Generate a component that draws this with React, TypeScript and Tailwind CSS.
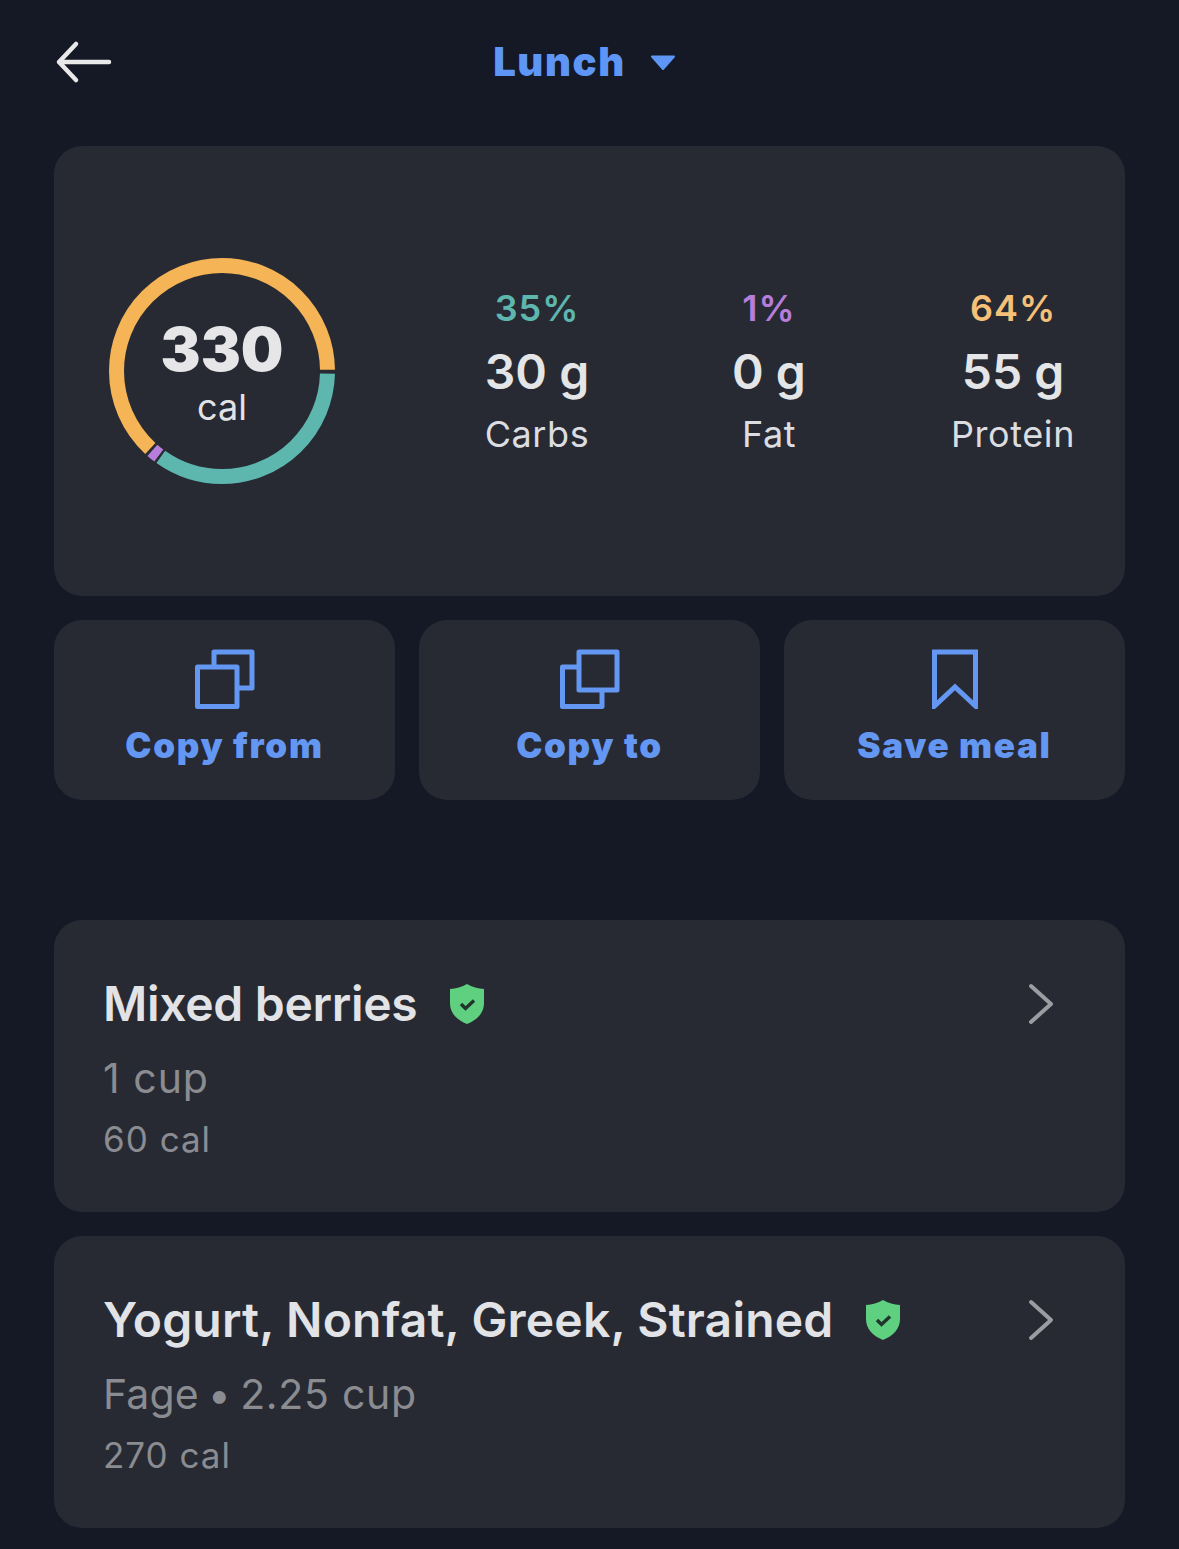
const Stat = ({ pct, pctClass, grams, label, className }: { pct: string; pctClass: string; grams: string; label: string; className: string }) => (
  <div className={`flex flex-col items-center w-[200px] shrink-0 ${className}`}>
    <div className={`text-[36px] leading-[42px] font-semibold tracking-[1px] ${pctClass}`}>{pct}</div>
    <div className="text-[48px] leading-[56px] font-semibold text-[#e4e5e7] mt-[15px]">{grams}</div>
    <div className="text-[36px] leading-[44px] text-[#dcdde0] tracking-[0.6px] mt-[12px]">{label}</div>
  </div>
);

const Shield = () => (
  <svg width="34" height="40" viewBox="0 0 34 40" className="shrink-0">
    <path d="M17 0 C22 3 28 4.5 34 5 V19 C34 29 27 36 17 40 C7 36 0 29 0 19 V5 C6 4.5 12 3 17 0 Z" fill="#5fcf80" />
    <path d="M11 20 L15.5 24.5 L24 16.5" fill="none" stroke="#20352c" strokeWidth="3.4" />
  </svg>
);

const Chevron = () => (
  <svg width="26" height="42" viewBox="0 0 26 42" fill="none" className="shrink-0">
    <path d="M3 3 L23 21 L3 39" stroke="#9b9da2" strokeWidth="4" strokeLinecap="round" strokeLinejoin="round" />
  </svg>
);

const FoodCard = ({ name, nameClass, detail, cal }: { name: string; nameClass: string; detail: React.ReactNode; cal: string }) => (
  <div className="h-[292px] bg-[#272a33] rounded-[28px] pl-[49px] pr-[71px] pt-[52px] flex justify-between items-start">
    <div>
      <div className="flex items-center gap-[33px] h-[64px]">
        <span className={`text-[48px] leading-[64px] font-semibold text-[#e2e3e6] ${nameClass}`}>{name}</span>
        <Shield />
      </div>
      <div className="text-[41px] leading-[50px] tracking-[0.1px] text-[#8a8c91] mt-[17px]">{detail}</div>
      <div className="text-[35px] leading-[44px] tracking-[1px] text-[#8a8c91] mt-[14px]">{cal}</div>
    </div>
    <div className="mt-[11px]">
      <Chevron />
    </div>
  </div>
);

const ActionButton = ({ icon, label }: { icon: React.ReactNode; label: string }) => (
  <button className="flex-1 h-[180px] bg-[#272a33] rounded-[28px] flex flex-col items-center pt-[28px]">
    <div className="h-[62px] flex items-center justify-center">{icon}</div>
    <span className="text-[35px] leading-[44px] font-black text-[#6497f2] mt-[13px] tracking-[1.7px]">{label}</span>
  </button>
);

export default function App() {
  return (
    <div className="w-[1179px] h-[1549px] bg-[#151825] overflow-hidden px-[54px]" style={{ fontFamily: 'Inter, sans-serif' }}>
      {/* Header */}
      <div className="h-[146px] relative flex items-start justify-center pt-[37px]">
        <svg width="58" height="44" viewBox="0 0 58 44" className="absolute left-[1px] top-[40px]">
          <path d="M54 22 H4 M21 4 L4 22 L21 40" fill="none" stroke="#e9e9ea" strokeWidth="4.5" strokeLinecap="round" strokeLinejoin="round" />
        </svg>
        <div className="flex items-center ml-[-10px]">
          <span className="text-[40px] leading-[50px] font-black tracking-[1.6px] text-[#5e96f5]">Lunch</span>
          <svg width="26" height="15" viewBox="0 0 26 15" className="ml-[24px]">
            <path d="M2 1.5 H24 L13 14 Z" fill="#5e96f5" stroke="#5e96f5" strokeWidth="2" strokeLinejoin="round" />
          </svg>
        </div>
      </div>

      {/* Summary */}
      <div className="h-[450px] bg-[#272a33] rounded-[28px] flex items-center pl-[55px]">
        <div className="relative w-[226px] h-[226px] shrink-0">
          <svg width="226" height="226" viewBox="0 0 226 226">
            <g fill="none" strokeWidth="15">
              <circle cx="113" cy="113" r="105.5" stroke="#5db7ae" pathLength={360} strokeDasharray="124 360" strokeDashoffset={-1.5} />
              <circle cx="113" cy="113" r="105.5" stroke="#b77ddb" pathLength={360} strokeDasharray="4.5 360" strokeDashoffset={-126.8} />
              <circle cx="113" cy="113" r="105.5" stroke="#f5b455" pathLength={360} strokeDasharray="226.5 360" strokeDashoffset={-132.8} />
            </g>
          </svg>
          <div className="absolute inset-0 flex flex-col items-center">
            <span className="text-[60px] leading-[70px] font-black text-[#e6e6e8] mt-[56px]">330</span>
            <span className="text-[36px] leading-[44px] text-[#e2e3e6] mt-[1px]">cal</span>
          </div>
        </div>
        <Stat className="ml-[102px]" pct="35%" pctClass="text-[#5db7ae]" grams="30 g" label="Carbs" />
        <Stat className="ml-[32px]" pct="1%" pctClass="text-[#b77ddb]" grams="0 g" label="Fat" />
        <Stat className="ml-[44px]" pct="64%" pctClass="text-[#f5c078]" grams="55 g" label="Protein" />
      </div>

      {/* Actions */}
      <div className="flex gap-[24px] mt-[24px]">
        <ActionButton
          label="Copy from"
          icon={
            <svg width="60" height="60" viewBox="0 0 60 60" fill="none" stroke="#6497f2" strokeWidth="5" strokeLinejoin="round">
              <path d="M19 18 V3 H57 V39 H42" />
              <rect x="2.5" y="18" width="39.5" height="39.5" />
            </svg>
          }
        />
        <ActionButton
          label="Copy to"
          icon={
            <svg width="60" height="60" viewBox="0 0 60 60" fill="none" stroke="#6497f2" strokeWidth="5" strokeLinejoin="round">
              <path d="M19 18 H2.5 V57.5 H42 V41" />
              <rect x="19" y="3" width="38" height="38" />
            </svg>
          }
        />
        <ActionButton
          label="Save meal"
          icon={
            <svg width="46" height="60" viewBox="0 0 46 60" fill="none" stroke="#6497f2" strokeWidth="5" strokeLinejoin="miter">
              <path d="M2.5 57 V3 H43.5 V57 L23 38 Z" />
            </svg>
          }
        />
      </div>

      {/* Foods */}
      <div className="flex flex-col gap-[24px] mt-[120px]">
        <FoodCard
          name="Mixed berries"
          nameClass="tracking-[-0.3px]"
          detail={<span className="tracking-[1px]">1 cup</span>}
          cal="60 cal"
        />
        <FoodCard
          name="Yogurt, Nonfat, Greek, Strained"
          nameClass="tracking-[0.2px]"
          detail={
            <>
              Fage <span className="-mx-[2.5px]">•</span> <span className="tracking-[0.7px]">2.25 cup</span>
            </>
          }
          cal="270 cal"
        />
      </div>
    </div>
  );
}
